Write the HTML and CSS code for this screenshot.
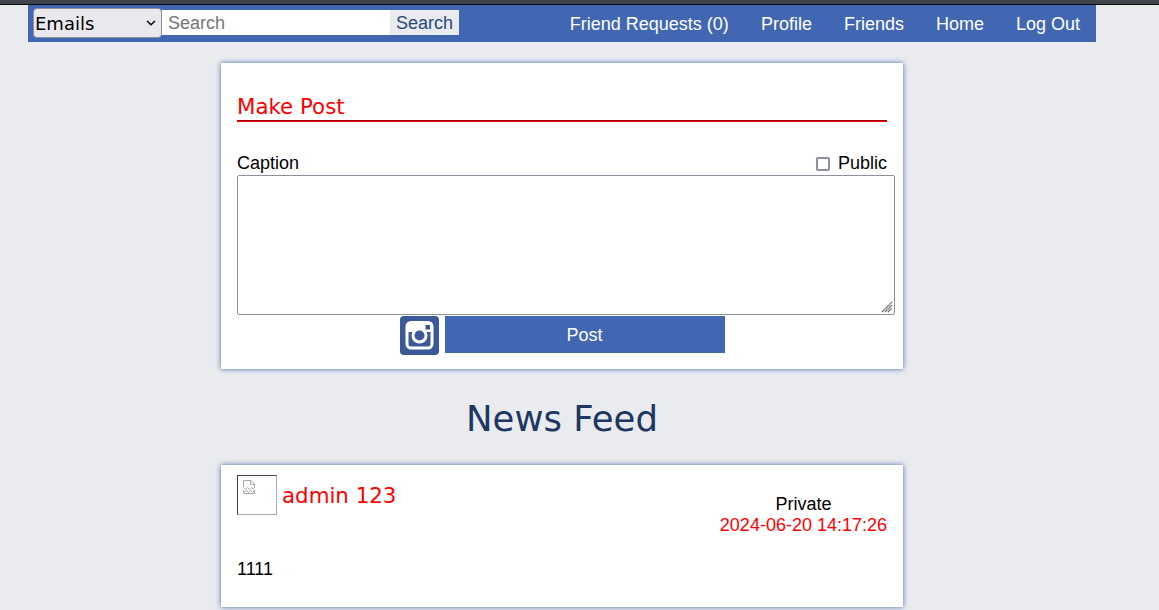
FILE: index.html
```html
<!DOCTYPE html>
<html lang="en">
<head>
<meta charset="utf-8">
<title>News Feed</title>
<link rel="stylesheet" href="styles.css">
</head>
<body>
<div class="topline"></div>
<nav class="nav">
  <form class="search">
    <div class="select"><span>Emails</span>
      <svg class="chevron" width="10" height="6" viewBox="0 0 10 6"><path d="M1 1 L5 4.8 L9 1" fill="none" stroke="#000" stroke-width="1.5"/></svg>
    </div>
    <input class="query" type="text" placeholder="Search">
    <button class="go" type="button">Search</button>
  </form>
  <div class="links">
    <a>Friend Requests (0)</a><a>Profile</a><a>Friends</a><a>Home</a><a>Log Out</a>
  </div>
</nav>
<main class="main">
  <section class="card make">
    <h2 class="title">Make Post</h2>
    <div class="rule"></div>
    <div class="labels">
      <span>Caption</span>
      <label class="public"><span class="check"></span>Public</label>
    </div>
    <div class="caption">
      <svg class="grip" width="12" height="12" viewBox="0 0 12 12"><g fill="none" stroke="#666" stroke-width="1.4" stroke-dasharray="1.4 .4"><path d="M1 11 L11 1M4 11 L11 4M7 11 L11 7"/></g></svg>
    </div>
    <div class="actions">
      <svg class="photo" width="39" height="39" viewBox="0 0 39 39">
        <rect width="39" height="39" rx="4" fill="#3b5998"/>
        <rect x="7" y="6.5" width="25" height="25.5" rx="4" fill="none" stroke="#fff" stroke-width="3"/>
        <path d="M7 8 Q8 6 10 6H29Q32 6 32 9V16H7Z" fill="#fff"/>
        <circle cx="19.5" cy="19.5" r="8" fill="#fff"/>
        <circle cx="19.5" cy="19.5" r="5" fill="#3b5998"/>
        <rect x="25.5" y="9" width="4.5" height="4.5" fill="#3b5998"/>
      </svg>
      <button class="post" type="button">Post</button>
    </div>
  </section>
  <h1 class="feed">News Feed</h1>
  <section class="card entry">
    <div class="head">
      <div class="author">
        <div class="avatar">
          <svg width="12" height="14" viewBox="0 0 12 14"><g fill="none" stroke="#aaa"><path d="M.5 7V.5H8L11.5 4V8"/><path d="M7.5.5V4.5H11.5"/><path d="M.5 7.5L2.5 9.5L4.5 7.5L6.5 9.5L8.5 7.5L11.5 9.5"/><path d="M.5 10V13.5H11.5V10.5L9.5 12L7.5 10.5L5.5 12.5L3.5 10.5L.5 12.5"/></g></svg>
        </div>
        <span class="name">admin 123</span>
      </div>
      <div class="meta"><span>Private</span><span class="date">2024-06-20 14:17:26</span></div>
    </div>
    <p class="text">1111</p>
  </section>
</main>
</body>
</html>
```
FILE: styles.css
```css
* { box-sizing: border-box; }
body {
  margin: 0;
  height: 610px;
  overflow: hidden;
  background: #e9ebee;
  color: #000;
  font: 18px/21px "Liberation Sans", Arial, sans-serif;
}
button, input { font: inherit; border: 0; margin: 0; border-radius: 0; }
.topline { height: 5px; background: #42444b; border-bottom: 1px solid #0c0c0d; }
.nav {
  display: flex;
  justify-content: space-between;
  width: 1068px;
  height: 37px;
  margin-left: 28px;
  padding: 0 16px 0 5px;
  background: #4267b2;
}
.search { display: flex; align-items: flex-start; margin: 0; padding-top: 3px; }
.select {
  display: flex;
  align-items: center;
  justify-content: space-between;
  width: 129px;
  height: 30px;
  padding: 0 5px 0 1px;
  border: 1px solid #8f8f9d;
  border-radius: 4px;
  background: #e9e9ed;
  font-family: "DejaVu Sans", sans-serif;
}
.query { width: 228px; height: 25px; margin-top: 2px; padding: 2px 6px 0; background: #fff; outline: 0; }
.query::placeholder { color: #757575; }
.go { width: 69px; height: 25px; margin-top: 2px; padding: 2px 0 0; background: #e9ebee; color: #29487d; }
.links { display: flex; gap: 32px; line-height: 39px; color: #fff; }
.main { width: 682px; margin: 21px 0 0 221px; }
.card { padding: 0 16px; background: #fff; box-shadow: 0 0 5px #4267b2; }
.make { height: 306px; padding-top: 30px; }
.title { margin: 0; color: #f00; font: 21.35px/27px "DejaVu Sans", sans-serif; }
.rule { height: 2px; border-top: 1px solid #9f0000; border-bottom: 1px solid #f00; }
.labels { display: flex; justify-content: space-between; padding-top: 31px; height: 53px; }
.public { display: flex; }
.check { width: 14px; height: 14px; margin: 4px 8px 0 0; border: 2px solid #8f8f9d; border-radius: 2px; }
.caption {
  display: flex;
  justify-content: flex-end;
  align-items: flex-end;
  width: 658px;
  height: 140px;
  padding: 1px;
  border: 1px solid #8f8f9d;
  border-radius: 2px;
}
.actions { display: flex; justify-content: center; gap: 6px; padding-top: 1px; }
.post { width: 280px; height: 37px; padding: 2px 0 0; background: #4267b2; color: #fff; }
.feed { margin: 29px 0 25px; text-align: center; color: #1d3663; font: 35.5px/42px "DejaVu Sans", sans-serif; }
.entry { height: 142px; padding-top: 10px; }
.head { display: flex; justify-content: space-between; height: 84px; }
.author { display: flex; gap: 5px; height: 40px; }
.avatar { width: 40px; height: 40px; padding: 4px 5px; border: 1px solid #aaa; border-top-color: #444; border-left-color: #444; line-height: 0; }
.name { color: #f00; font: 21.35px/42px "DejaVu Sans", sans-serif; }
.meta { display: flex; flex-direction: column; align-items: center; padding-top: 19px; }
.date { color: #f00; }
.text { margin: 0; }
```
